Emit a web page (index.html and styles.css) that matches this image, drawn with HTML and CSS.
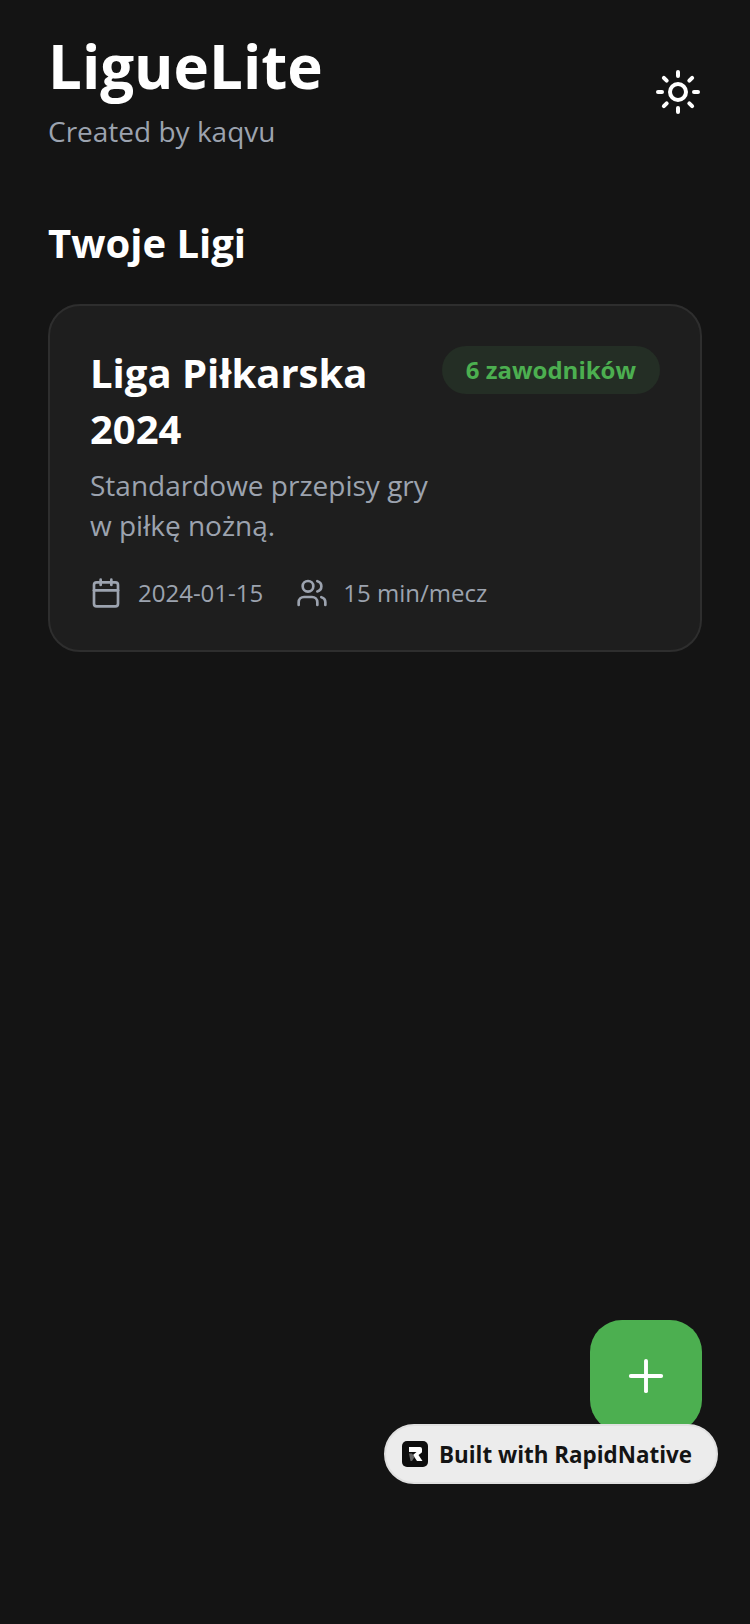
FILE: index.html
```html
<!DOCTYPE html>
<html lang="pl">

<head>
    <meta charset="UTF-8">
    <meta name="viewport" content="width=device-width, initial-scale=1.0">
    <title>LigueLite</title>
    <link rel="stylesheet" href="styles.css">
</head>

<body>
    <div class="page">
        <header class="header">
            <div>
                <h1 class="app-title">LigueLite</h1>
                <p class="app-sub">Created by kaqvu</p>
            </div>
            <svg class="theme-icon" viewBox="0 0 24 24" fill="none" stroke="#fff" stroke-width="2" stroke-linecap="round" stroke-linejoin="round">
                <circle cx="12" cy="12" r="4" />
                <path d="M12 2v2" />
                <path d="M12 20v2" />
                <path d="m4.93 4.93 1.41 1.41" />
                <path d="m17.66 17.66 1.41 1.41" />
                <path d="M2 12h2" />
                <path d="M20 12h2" />
                <path d="m6.34 17.66-1.41 1.41" />
                <path d="m19.07 4.93-1.41 1.41" />
            </svg>
        </header>

        <h2 class="section-title">Twoje Ligi</h2>

        <section class="card">
            <div class="card-top">
                <h3 class="card-title">Liga Piłkarska 2024</h3>
                <span class="badge">6 zawodników</span>
            </div>
            <p class="card-desc">Standardowe przepisy gry<br>w piłkę nożną.</p>
            <div class="meta">
                <div class="meta-item">
                    <svg class="meta-icon" viewBox="0 0 24 24" fill="none" stroke="#9ca3af" stroke-width="2" stroke-linecap="round" stroke-linejoin="round">
                        <path d="M8 2v4" />
                        <path d="M16 2v4" />
                        <rect x="3" y="4" width="18" height="18" rx="2" />
                        <path d="M3 10h18" />
                    </svg>
                    <span>2024-01-15</span>
                </div>
                <div class="meta-item">
                    <svg class="meta-icon" viewBox="0 0 24 24" fill="none" stroke="#9ca3af" stroke-width="2" stroke-linecap="round" stroke-linejoin="round">
                        <path d="M16 21v-2a4 4 0 0 0-4-4H6a4 4 0 0 0-4 4v2" />
                        <circle cx="9" cy="7" r="4" />
                        <path d="M22 21v-2a4 4 0 0 0-3-3.87" />
                        <path d="M16 3.13a4 4 0 0 1 0 7.75" />
                    </svg>
                    <span>15 min/mecz</span>
                </div>
            </div>
        </section>

        <button class="fab">
            <svg class="fab-icon" viewBox="0 0 24 24" fill="none" stroke="#fff" stroke-width="1.8" stroke-linecap="round" stroke-linejoin="round">
                <path d="M5 12h14" />
                <path d="M12 5v14" />
            </svg>
        </button>

        <div class="built">
            <svg class="built-logo" viewBox="0 0 26 26">
                <rect width="26" height="26" rx="5" fill="#0d0d0d" />
                <path d="M7 6h11a2 2 0 0 1 2 2v2.500a2 2 0 0 1-.8 1.600L16.500 14l4 6h-5.500l-4-6 3.500-3H7z" fill="#fff" />
                <path d="M7 12.500h3l2.500 3.500-2.500 4H8.500z" fill="#666" />
            </svg>
            <span>Built with RapidNative</span>
        </div>
    </div>
</body>

</html>
```

FILE: styles.css
```css
* {
    box-sizing: border-box;
}

body {
    margin: 0;
    background: #141414;
    font-family: 'Open Sans', sans-serif;
}

.page {
    position: relative;
    height: 1624px;
    padding: 24px 48px 0;
    overflow: hidden;
}

.header {
    display: flex;
    justify-content: space-between;
    align-items: center;
}

.app-title {
    margin: 0;
    font-size: 60px;
    line-height: 84px;
    font-weight: 700;
    color: #fff;
}

.app-sub {
    margin: 3px 0 0;
    font-size: 28px;
    line-height: 40px;
    color: #9ca3af;
}

.theme-icon {
    width: 48px;
    height: 48px;
    margin-top: 9px;
}

.section-title {
    margin: 64px 0 33px;
    font-size: 40px;
    line-height: 56px;
    font-weight: 700;
    color: #fff;
}

.card {
    padding: 39px 40px 37px;
    background: #1e1e1e;
    border: 2px solid #2e2e2e;
    border-radius: 32px;
}

.card-top {
    display: flex;
    justify-content: space-between;
    align-items: flex-start;
}

.card-title {
    width: 300px;
    margin: 0;
    font-size: 40px;
    line-height: 56px;
    font-weight: 700;
    color: #fff;
}

.badge {
    margin-top: 1px;
    padding: 8px 24px;
    background: #242e25;
    border-radius: 24px;
    font-size: 24px;
    line-height: 32px;
    font-weight: 700;
    color: #4caf50;
}

.card-desc {
    margin: 8px 0 28px;
    font-size: 28px;
    line-height: 40px;
    color: #9ca3af;
}

.meta {
    display: flex;
    gap: 33px;
}

.meta-item {
    display: flex;
    align-items: center;
    gap: 16px;
    font-size: 24px;
    line-height: 40px;
    color: #9ca3af;
}

.meta-item:last-child {
    gap: 15px;
}

.meta-icon {
    width: 32px;
    height: 32px;
}

.fab {
    position: absolute;
    right: 48px;
    top: 1320px;
    width: 112px;
    height: 112px;
    display: flex;
    align-items: center;
    justify-content: center;
    padding: 0;
    border: none;
    background: #4caf50;
    border-radius: 32px;
}

.fab-icon {
    width: 52px;
    height: 52px;
}

.built {
    position: absolute;
    left: 384px;
    top: 1424px;
    width: 334px;
    height: 60px;
    display: flex;
    align-items: center;
    padding-left: 16px;
    gap: 11px;
    background: #ececec;
    border: 2px solid #e0e0e0;
    border-radius: 30px;
    font-size: 22.4px;
    font-weight: 700;
    color: #141414;
}

.built-logo {
    width: 26px;
    height: 26px;
}
```
